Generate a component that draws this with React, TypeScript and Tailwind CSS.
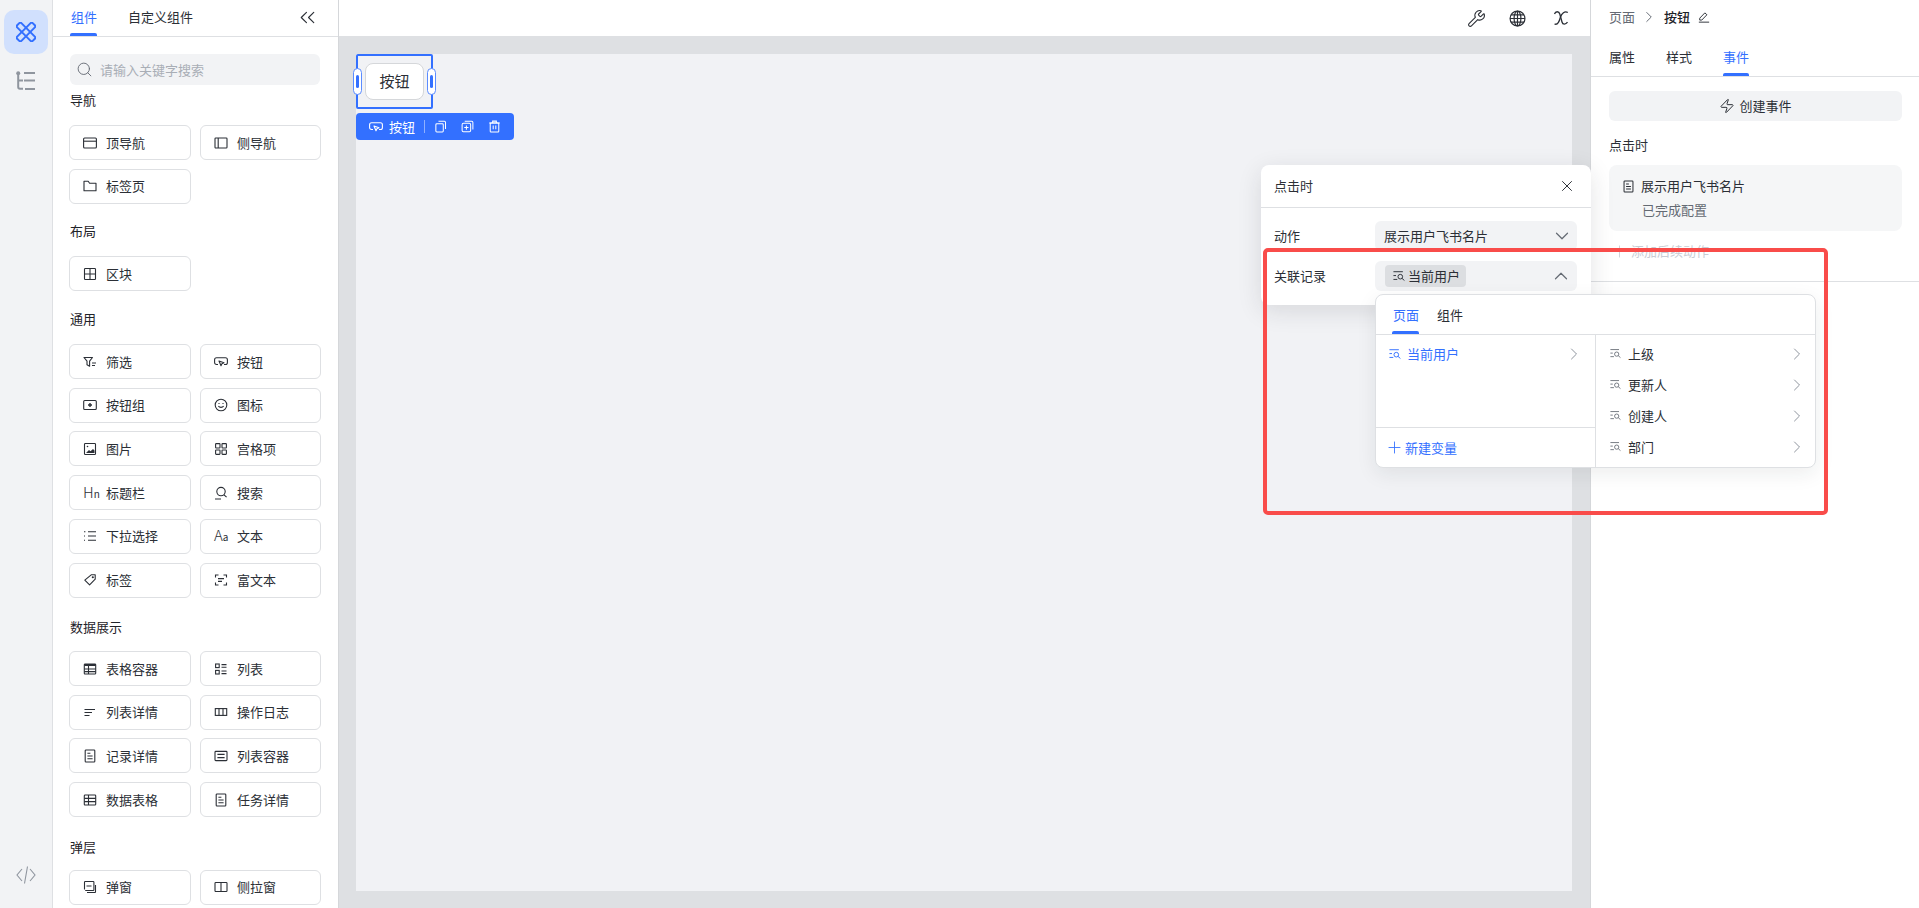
import type { ReactNode } from 'react';
import { ChevronDown, ChevronRight, ChevronUp, ChevronsLeft, Plus, Search, Wrench, X, Zap } from 'lucide-react';

const Svg = ({ children, className = 'size-[14px] text-[#2b2f36]' }: { children: ReactNode; className?: string }) => (
	<svg viewBox="0 0 14 14" fill="none" stroke="currentColor" strokeWidth="1.1" className={`shrink-0 ${className}`}>
		{children}
	</svg>
);

const shapes: Record<string, ReactNode> = {
	topNav: (
		<>
			<rect x="0.6" y="2" width="12.8" height="10" rx="1" />
			<path d="M.6 5.2h12.8" />
		</>
	),
	sideNav: (
		<>
			<rect x="1" y="2" width="12" height="10" rx="0.8" />
			<path d="M4.2 2v10" />
		</>
	),
	folder: <path d="M1 2.2h4.2l1.4 2H13v7.6H1z" strokeLinejoin="round" />,
	block: (
		<>
			<rect x="1.5" y="1.5" width="11" height="11" rx="0.8" />
			<path d="M1.5 7h11M7 1.5v11" />
		</>
	),
	filter: (
		<>
			<path d="M1 2.5h8.5L6.6 6.2v5L4 9.8V6.2z" strokeLinejoin="round" />
			<path d="M9 8h4M9 10.5h3" />
		</>
	),
	pointer: (
		<>
			<path d="M4 9.5H2.6C1.4 9.5.6 8.6.6 7.4V4.8c0-1.2.8-2 2-2h8.8c1.200 0 2 .8 2 2v2.6c0 1.2-.8 2.1-2 2.1H10" />
			<path d="M5 6l5 1.8-2.1.9-.9 2.100z" strokeLinejoin="round" />
		</>
	),
	buttonGroup: (
		<>
			<rect x="0.7" y="2.5" width="12.6" height="9" rx="1" />
			<path d="M7 5v4M5 7h4" strokeWidth="1.4" />
		</>
	),
	smile: (
		<>
			<circle cx="7" cy="7" r="5.8" />
			<path d="M4.4 8.2c1.2 1.6 4 1.6 5.2 0" />
			<path d="M5 5v1M9 5v1" />
		</>
	),
	image: (
		<>
			<rect x="1.5" y="1.5" width="11" height="11" rx="0.8" />
			<path d="M3 11l3-3 1.5 1.2L10 7l1.5 1.5V11z" fill="currentColor" stroke="none" />
			<circle cx="4.5" cy="4.5" r="0.8" fill="currentColor" stroke="none" />
		</>
	),
	grid: (
		<>
			<rect x="1.6" y="1.6" width="4.4" height="4.4" rx="0.6" />
			<rect x="8" y="1.6" width="4.4" height="4.4" rx="0.6" />
			<rect x="1.6" y="8" width="4.4" height="4.4" rx="0.6" />
			<rect x="8" y="8" width="4.4" height="4.4" rx="0.6" />
		</>
	),
	search: (
		<>
			<circle cx="7" cy="5.6" r="4.2" />
			<path d="M10 8.8l2.6 2.4M1 13h6" />
		</>
	),
	list: <path d="M1 2.8h1.4M1 7h1M1 11.2h1M5 2.8h8M5 7h8M5 11.2h8" />,
	tag: (
		<>
			<path d="M8.2 1.8h4v4.4L6.6 11.8 1.8 7.2z" strokeLinejoin="round" />
			<circle cx="9.8" cy="4.2" r="0.5" fill="currentColor" />
		</>
	),
	rich: <path d="M1.5 4.5V2h3M9.5 2h3v2.5M1.500 9.5V12h3M9.5 12h3V9.5M4 5.6h6M4 8.4h4" />,
	tableFill: (
		<>
			<rect x="1.3" y="2" width="11.4" height="10" rx="0.8" />
			<path d="M1.3 3h11.4" strokeWidth="2" />
			<path d="M1.3 7h11.4M1.3 9.6h11.4M5.5 3v9" />
		</>
	),
	listGrid: (
		<>
			<rect x="1.6" y="2" width="3.6" height="3.6" />
			<rect x="1.6" y="8.4" width="3.6" height="3.6" />
			<path d="M7.5 2.6h5M7.5 5.2h5M7.5 9h5M7.5 11.6h5" />
		</>
	),
	lines: <path d="M1.5 4.5H12M1.5 7.5h7.5M1.5 10.5h5" />,
	log: (
		<>
			<rect x="1.3" y="3.6" width="11.4" height="6.8" />
			<path d="M5 3.6v6.8M9 3.6v6.8" />
		</>
	),
	doc: (
		<>
			<rect x="2.2" y="1" width="9.6" height="12" rx="0.8" />
			<path d="M4.4 4.2h3M4.4 7h5.2M4.4 9.8h5.2" />
		</>
	),
	listBox: (
		<>
			<rect x="1" y="2.4" width="12" height="9.2" rx="0.8" />
			<path d="M3.4 5.4h7.2M3.4 8.6h7.2" />
		</>
	),
	table: (
		<>
			<rect x="1.3" y="2" width="11.4" height="10" rx="0.8" />
			<path d="M1.3 5.4h11.4M1.3 8.6h11.4M5.5 2v10" />
		</>
	),
	modal: (
		<>
			<path d="M1.5 9.5V2.2c0-.4.3-.7.7-.7h8c.4 0 .7.3.7.7v7.6c0 .4-.3.7-.7.7H2.2" />
			<path d="M12.5 5v7c0 .3-.2.5-.5.5H4M3.5 6h5" />
		</>
	),
	drawer: (
		<>
			<rect x="1" y="2.5" width="12" height="9" rx="0.8" />
			<path d="M7 2.5v9" />
		</>
	),
	record: (
		<>
			<path d="M.5 2h11M.5 6.5h3M.5 11h4.500" />
			<circle cx="8.500" cy="7.800" r="2.700" />
			<path d="M10.500 9.800l2.800 2.400" />
		</>
	),
	copy: (
		<>
			<rect x="2" y="4" width="8" height="8.8" rx="1" />
			<path d="M4.8 1.4h6.4c.7 0 1.2.5 1.2 1.2v7" />
		</>
	),
	duplicate: (
		<>
			<rect x="1.2" y="3.6" width="9.2" height="9" rx="1.4" />
			<path d="M4 1.4h7.6c.7 0 1.2.5 1.2 1.2v7.6M5.8 5.8v4.6M3.5 8.1h4.6" />
		</>
	),
	trash: (
		<>
			<path d="M1.2 3.2h11.6M5 3V1.2h4V3" />
			<rect x="2.4" y="3.2" width="9.2" height="9.6" rx="0.8" />
			<path d="M5.6 6v4M8.4 6v4" />
		</>
	),
	edit: <path d="M2 8.4L8 2.2l2.4 2.2-6 6.2H2zM1 13h12" strokeLinejoin="round" />,
};

const Icon = ({ name, className }: { name: string; className?: string }) => <Svg className={className}>{shapes[name]}</Svg>;

const GlyphIcon = ({ big, small }: { big: string; small: string }) => (
	<span className="flex w-[14px] shrink-0 items-baseline text-[#2b2f36]">
		<span className="text-[15px] leading-5 font-light">{big}</span>
		<span className="text-[10px] leading-5">{small}</span>
	</span>
);

type Item = { label: string; icon?: string; glyph?: [string, string] };

const sections: { title: string; top: string; bottom: string; items: Item[] }[] = [
	{
		title: '导航',
		top: 'mt-[5px]',
		bottom: 'mb-[15px]',
		items: [
			{ label: '顶导航', icon: 'topNav' },
			{ label: '侧导航', icon: 'sideNav' },
			{ label: '标签页', icon: 'folder' },
		],
	},
	{ title: '布局', top: 'mt-[17.7px]', bottom: 'mb-[15px]', items: [{ label: '区块', icon: 'block' }] },
	{
		title: '通用',
		top: 'mt-[17.7px]',
		bottom: 'mb-[15px]',
		items: [
			{ label: '筛选', icon: 'filter' },
			{ label: '按钮', icon: 'pointer' },
			{ label: '按钮组', icon: 'buttonGroup' },
			{ label: '图标', icon: 'smile' },
			{ label: '图片', icon: 'image' },
			{ label: '宫格项', icon: 'grid' },
			{ label: '标题栏', glyph: ['H', 'n'] },
			{ label: '搜索', icon: 'search' },
			{ label: '下拉选择', icon: 'list' },
			{ label: '文本', glyph: ['A', 'a'] },
			{ label: '标签', icon: 'tag' },
			{ label: '富文本', icon: 'rich' },
		],
	},
	{
		title: '数据展示',
		top: 'mt-[19.5px]',
		bottom: 'mb-[14px]',
		items: [
			{ label: '表格容器', icon: 'tableFill' },
			{ label: '列表', icon: 'listGrid' },
			{ label: '列表详情', icon: 'lines' },
			{ label: '操作日志', icon: 'log' },
			{ label: '记录详情', icon: 'doc' },
			{ label: '列表容器', icon: 'listBox' },
			{ label: '数据表格', icon: 'table' },
			{ label: '任务详情', icon: 'doc' },
		],
	},
	{
		title: '弹层',
		top: 'mt-[19.8px]',
		bottom: 'mb-[13px]',
		items: [
			{ label: '弹窗', icon: 'modal' },
			{ label: '侧拉窗', icon: 'drawer' },
		],
	},
];

const recordFields = ['上级', '更新人', '创建人', '部门'];

const Rail = () => (
	<div className="flex w-[53px] shrink-0 flex-col items-center border-r border-[#dee0e3] bg-[#f2f3f5] pt-[10px] pr-[1px] pb-[23px]">
		<div className="flex size-[44px] items-center justify-center rounded-[10px] bg-[#d1e0fd] text-[#3370ff]">
			<svg viewBox="0 0 20 20" fill="none" stroke="currentColor" strokeWidth="2" className="size-[20px]">
				<rect x="-1" y="7" width="22" height="6" rx="1.5" transform="rotate(45 10 10)" />
				<rect x="-1" y="7" width="22" height="6" rx="1.5" transform="rotate(-45 10 10)" />
			</svg>
		</div>
		<svg viewBox="0 0 20 20" fill="none" stroke="#8f959e" className="mt-[17px] size-[20px]">
			<circle cx="2.2" cy="2.2" r="2" fill="#8f959e" stroke="none" />
			<path d="M2.2 2v14c0 1.2.6 1.800 1.800 1.800h3M2.200 9.500H7M8 2h11M8 9.500h11M9 18h10" strokeWidth="2" />
		</svg>
		<svg viewBox="0 0 20 20" fill="none" stroke="#8f959e" strokeWidth="1.1" className="mt-auto size-[20px]">
			<path d="M6 4l-5 6 5 6M14 4l5 6-5 6M11.5 1.5l-3 17" />
		</svg>
	</div>
);

const ComponentPanel = () => (
	<div className="w-[286px] shrink-0 overflow-hidden border-r border-[#d5d7da] bg-white">
		<div className="relative flex h-[37px] items-start border-b border-[#dee0e3] pt-[7px] pl-[18px] text-[13px] leading-5">
			<div className="relative h-[29px] w-[26px] text-[#3370ff]">
				组件
				<span className="absolute bottom-0 -left-[1px] h-[3px] w-[27px] rounded-t-[2px] bg-[#3370ff]" />
			</div>
			<span className="ml-[31px] text-[#2b2f36]">自定义组件</span>
			<ChevronsLeft className="-mt-[2.5px] mr-[18px] ml-auto size-[25px] text-[#2b2f36]" strokeWidth={1.1} />
		</div>
		<div className="px-4 pt-[17px]">
			<div className="ml-[1px] flex h-[31px] w-[250px] items-center gap-[7px] rounded-[6px] bg-[#f2f3f5] pl-[6px] text-[13px] text-[#a9aeb6]">
				<Search className="size-[17px] text-[#646a73]" strokeWidth={1.3} />
				请输入关键字搜索
			</div>
			{sections.map((section) => (
				<div key={section.title} className={section.top}>
					<div className={`ml-[1px] text-[13px] leading-5 text-[#1f2329] ${section.bottom}`}>{section.title}</div>
					<div className="grid grid-cols-[122px_121px] gap-x-[9px] gap-y-[8.7px]">
						{section.items.map((item) => (
							<div
								key={item.label}
								className="flex h-[35px] items-center gap-[9px] rounded-[6px] border border-[#dee0e3] bg-white pl-[13px] text-[13px] leading-5 text-[#2b2f36]"
							>
								{item.glyph ? <GlyphIcon big={item.glyph[0]} small={item.glyph[1]} /> : <Icon name={item.icon as string} />}
								{item.label}
							</div>
						))}
					</div>
				</div>
			))}
		</div>
	</div>
);

const Handle = ({ side }: { side: string }) => (
	<span className={`absolute top-[12px] flex h-[27px] w-[9px] items-center justify-center rounded-full border border-[#5b8cff] bg-white ${side}`}>
		<span className="h-[13px] w-[3px] rounded-full bg-[#3370ff]" />
	</span>
);

const Canvas = () => (
	<div className="flex min-w-0 flex-1 flex-col border-r border-[#d5d7da] bg-[#dee0e3]">
		<div className="flex h-[36px] shrink-0 items-center justify-end bg-white pr-[21px]">
			<Wrench className="size-[19px] text-[#2b2f36]" strokeWidth={1.4} />
			<svg viewBox="0 0 16 16" fill="none" stroke="#2b2f36" strokeWidth="1.1" className="ml-[23px] size-[17px]">
				<circle cx="8" cy="8" r="7" />
				<ellipse cx="8" cy="8" rx="3.2" ry="7" />
				<path d="M1 8h14M2 4.6h12M2 11.4h12M8 1v14" />
			</svg>
			<svg viewBox="0 0 16 16" fill="none" stroke="#2b2f36" strokeWidth="1.3" className="ml-[27px] size-[16px]">
				<path d="M1.5 4C2.5 1 6 1 6.800 4l2.200 8c.7 2.800 3.800 2.600 5.500.2" />
				<path d="M14.800 2.500c-3-2-6.300 1-7.300 4.500S5 15.500 1.500 14" />
			</svg>
		</div>
		<div className="mt-[18px] mr-[18px] ml-[17px] h-[837px] bg-[#f1f2f5]">
			<div className="relative h-[55px] w-[77px] rounded-[2px] border-2 border-[#3370ff] pt-[7px] pl-[7px]">
				<div className="flex h-[37px] w-[59px] items-center justify-center rounded-[8px] border border-[#d5d7da] bg-white text-[15px] text-[#2b2f36]">
					按钮
				</div>
				<Handle side="-left-[5px]" />
				<Handle side="-right-[5px]" />
			</div>
			<div className="mt-[4px] flex h-[27px] w-[158px] items-center rounded-[4px] bg-[#3370ff] pl-[13px] text-[13px] text-white">
				<Icon name="pointer" className="size-[14px] text-white" />
				<span className="ml-[6px]">按钮</span>
				<span className="mx-[9px] h-[13px] w-px bg-[#8fb0ff]" />
				<Icon name="copy" className="size-[13px] text-white" />
				<Icon name="duplicate" className="ml-[14px] size-[13px] text-white" />
				<Icon name="trash" className="ml-[14px] size-[13px] text-white" />
			</div>
		</div>
	</div>
);

const EventPanel = () => (
	<div className="flex w-[328px] shrink-0 flex-col bg-white text-[13px] leading-5 text-[#2b2f36]">
		<div className="flex h-[33px] items-center pl-[18px]">
			<span className="text-[#646a73]">页面</span>
			<ChevronRight className="mr-[6px] ml-[5px] size-[18px] text-[#646a73]" strokeWidth={1.3} />
			<span className="font-medium text-[#1f2329]">按钮</span>
			<Icon name="edit" className="ml-[8px] size-[12px] text-[#2b2f36]" />
		</div>
		<div className="flex h-[44px] gap-[31px] border-b border-[#dee0e3] pt-[14px] pl-[18px]">
			<span>属性</span>
			<span>样式</span>
			<span className="relative h-[29px] text-[#3370ff]">
				事件
				<span className="absolute bottom-0 left-0 h-[3px] w-full rounded-t-[2px] bg-[#3370ff]" />
			</span>
		</div>
		<div className="flex h-[205px] flex-col border-b border-[#dee0e3] px-[18px] pt-[14px]">
			<div className="flex h-[30px] w-[293px] items-center justify-center gap-[4px] rounded-[6px] bg-[#f2f3f5]">
				<Zap className="size-[16px]" strokeWidth={1.5} />
				创建事件
			</div>
			<div className="mt-[14px]">点击时</div>
			<div className="mt-[10px] h-[66px] w-[293px] rounded-[8px] bg-[#f5f6f7] pt-[11px] pl-[13px]">
				<div className="flex items-center gap-[6px]">
					<Icon name="doc" className="size-[13px] text-[#2b2f36]" />
					展示用户飞书名片
				</div>
				<div className="mt-[4px] pl-[20px] text-[#646a73]">已完成配置</div>
			</div>
			<div className="mt-[10px] flex items-center gap-[2px] pl-[1px] text-[#c9cdd4]">
				<Plus className="size-[19px]" strokeWidth={1.1} />
				添加后续动作
			</div>
		</div>
	</div>
);

const EventPopup = () => (
	<div className="absolute top-[165px] left-[1261px] h-[140px] w-[330px] rounded-[8px] bg-white text-[13px] leading-5 text-[#2b2f36] shadow-[0_6px_24px_rgba(31,35,41,0.12)]">
		<div className="flex h-[43px] items-center justify-between border-b border-[#dee0e3] pr-[15px] pl-[13px]">
			<span>点击时</span>
			<X className="size-[18px]" strokeWidth={1.3} />
		</div>
		<div className="flex flex-col gap-[10px] pt-[13px] pl-[13px]">
			<div className="flex items-center">
				<span className="w-[101px]">动作</span>
				<div className="flex h-[30px] w-[202px] items-center justify-between rounded-[6px] bg-[#f2f3f5] pr-[4px] pl-[9px]">
					展示用户飞书名片
					<ChevronDown className="size-[22px] text-[#646a73]" strokeWidth={1.3} />
				</div>
			</div>
			<div className="flex items-center">
				<span className="w-[101px]">关联记录</span>
				<div className="flex h-[30px] w-[202px] items-center justify-between rounded-[6px] bg-[#f2f3f5] pr-[5px] pl-[10px]">
					<span className="flex h-[22px] w-[81px] items-center gap-[3px] rounded-[4px] bg-[#dcdee1] pl-[8px]">
						<Icon name="record" className="size-[12px] text-[#2b2f36]" />
						当前用户
					</span>
					<ChevronUp className="size-[22px] text-[#646a73]" strokeWidth={1.3} />
				</div>
			</div>
		</div>
		<VariableMenu />
	</div>
);

const VariableMenu = () => (
	<div className="absolute top-[129px] left-[114px] flex h-[174px] w-[441px] flex-col rounded-[8px] border border-[#dee0e3] bg-white shadow-[0_6px_20px_rgba(31,35,41,0.08)]">
		<div className="flex h-[40px] shrink-0 gap-[18px] border-b border-[#dee0e3] pt-[10px] pl-[17px]">
			<span className="relative h-[29px] text-[#3370ff]">
				页面
				<span className="absolute bottom-0 -left-[1px] h-[3px] w-[27px] rounded-t-[2px] bg-[#3370ff]" />
			</span>
			<span>组件</span>
		</div>
		<div className="flex min-h-0 flex-1">
			<div className="flex w-[220px] flex-col border-r border-[#dee0e3]">
				<div className="flex h-[93px] items-start border-b border-[#dee0e3] pt-[9px] pr-[11px] pl-[13px] text-[#3370ff]">
					<div className="flex flex-1 items-center gap-[6px]">
						<Icon name="record" className="size-[12px] text-[#3370ff]" />
						当前用户
					</div>
					<ChevronRight className="size-[20px] text-[#8f959e]" strokeWidth={1.2} />
				</div>
				<div className="flex flex-1 items-center gap-[1px] pl-[9px] text-[#3370ff]">
					<Plus className="size-[19px]" strokeWidth={1.1} />
					新建变量
				</div>
			</div>
			<div className="flex flex-1 flex-col pt-[3px]">
				{recordFields.map((field) => (
					<div key={field} className="flex h-[31px] items-center pr-[8px] pl-[14px]">
						<div className="flex flex-1 items-center gap-[7px]">
							<Icon name="record" className="size-[11px] text-[#646a73]" />
							{field}
						</div>
						<ChevronRight className="size-[20px] text-[#8f959e]" strokeWidth={1.2} />
					</div>
				))}
			</div>
		</div>
	</div>
);

const App = () => {
	return (
		<div className="relative flex h-[908px] w-[1919px] overflow-hidden bg-white font-['Noto_Sans_CJK_SC','Noto_Sans',sans-serif]">
			<Rail />
			<ComponentPanel />
			<Canvas />
			<EventPanel />
			<EventPopup />
			<div className="pointer-events-none absolute top-[248px] left-[1263px] h-[267px] w-[565px] rounded-[5px] border-4 border-[#f94c4a]" />
		</div>
	);
};

export default App;
